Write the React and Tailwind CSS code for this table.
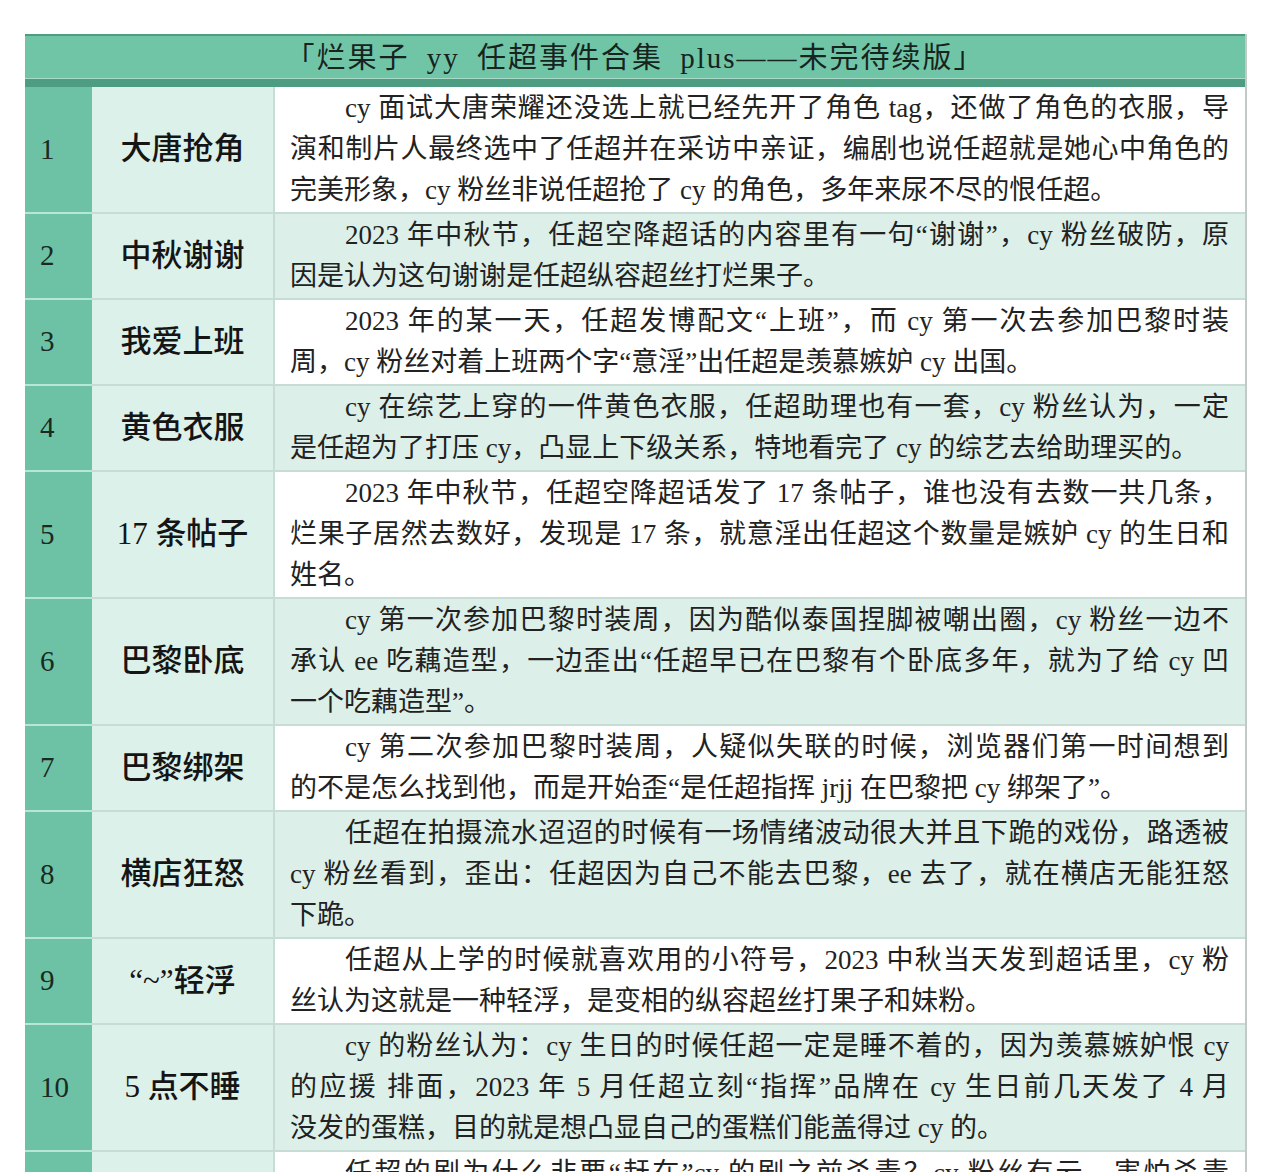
const serif = "font-['Liberation_Serif','Noto_Sans_CJK_SC',serif]"

const rows = [
  {
    n: '1',
    tag: '大唐抢角',
    lines: [
      'cy 面试大唐荣耀还没选上就已经先开了角色 tag，还做了角色的衣服，导',
      '演和制片人最终选中了任超并在采访中亲证，编剧也说任超就是她心中角色的',
      '完美形象，cy 粉丝非说任超抢了 cy 的角色，多年来尿不尽的恨任超。',
    ],
  },
  {
    n: '2',
    tag: '中秋谢谢',
    lines: [
      '2023 年中秋节，任超空降超话的内容里有一句“谢谢”，cy 粉丝破防，原',
      '因是认为这句谢谢是任超纵容超丝打烂果子。',
    ],
  },
  {
    n: '3',
    tag: '我爱上班',
    lines: [
      '2023 年的某一天，任超发博配文“上班”，而 cy 第一次去参加巴黎时装',
      '周，cy 粉丝对着上班两个字“意淫”出任超是羡慕嫉妒 cy 出国。',
    ],
  },
  {
    n: '4',
    tag: '黄色衣服',
    lines: [
      'cy 在综艺上穿的一件黄色衣服，任超助理也有一套，cy 粉丝认为，一定',
      '是任超为了打压 cy，凸显上下级关系，特地看完了 cy 的综艺去给助理买的。',
    ],
  },
  {
    n: '5',
    tag: '17 条帖子',
    lines: [
      '2023 年中秋节，任超空降超话发了 17 条帖子，谁也没有去数一共几条，',
      '烂果子居然去数好，发现是 17 条，就意淫出任超这个数量是嫉妒 cy 的生日和',
      '姓名。',
    ],
  },
  {
    n: '6',
    tag: '巴黎卧底',
    lines: [
      'cy 第一次参加巴黎时装周，因为酷似泰国捏脚被嘲出圈，cy 粉丝一边不',
      '承认 ee 吃藕造型，一边歪出“任超早已在巴黎有个卧底多年，就为了给 cy 凹',
      '一个吃藕造型”。',
    ],
  },
  {
    n: '7',
    tag: '巴黎绑架',
    lines: [
      'cy 第二次参加巴黎时装周，人疑似失联的时候，浏览器们第一时间想到',
      '的不是怎么找到他，而是开始歪“是任超指挥 jrjj 在巴黎把 cy 绑架了”。',
    ],
  },
  {
    n: '8',
    tag: '横店狂怒',
    lines: [
      '任超在拍摄流水迢迢的时候有一场情绪波动很大并且下跪的戏份，路透被',
      'cy 粉丝看到，歪出：任超因为自己不能去巴黎，ee 去了，就在横店无能狂怒',
      '下跪。',
    ],
  },
  {
    n: '9',
    tag: '“~”轻浮',
    lines: [
      '任超从上学的时候就喜欢用的小符号，2023 中秋当天发到超话里，cy 粉',
      '丝认为这就是一种轻浮，是变相的纵容超丝打果子和妹粉。',
    ],
  },
  {
    n: '10',
    tag: '5 点不睡',
    lines: [
      'cy 的粉丝认为：cy 生日的时候任超一定是睡不着的，因为羡慕嫉妒恨 cy',
      '的应援 排面，2023 年 5 月任超立刻“指挥”品牌在 cy 生日前几天发了 4 月',
      '没发的蛋糕，目的就是想凸显自己的蛋糕们能盖得过 cy 的。',
    ],
  },
  {
    n: '11',
    tag: '',
    lines: [
      '任超的剧为什么非要“赶在”cy 的剧之前杀青？cy 粉丝有云，害怕杀青',
      '\u00a0',
      '\u00a0',
    ],
  },
]

function Row({ row, even }) {
  return (
    <div className="grid grid-cols-[67px_183px_1fr]">
      <div className={`bg-[#6dc2a5] border-b-2 border-[#b6e6d4] flex items-center pl-[15px] text-[29px] text-[#1a2a22] ${serif}`}>
        {row.n}
      </div>
      <div className="bg-[#dcf1ea] border-b-2 border-r-2 border-[#c6dcd4] flex items-center justify-center text-[31px] font-medium text-[#151515]">
        {row.tag}
      </div>
      <div className={`${even ? 'bg-[#dcf0e9]' : 'bg-white'} border-b-2 border-[#c6dcd4] py-[1px] pl-[15px] pr-[16px] text-[27px] leading-[41px] text-[#222]`}>
        {row.lines.map((l, i) => {
          const last = i === row.lines.length - 1
          return (
            <div
              key={i}
              className={`whitespace-nowrap ${i === 0 ? 'indent-[55px]' : ''} ${last ? 'text-left' : 'text-justify [text-align-last:justify]'}`}
            >
              {l}
            </div>
          )
        })}
      </div>
    </div>
  )
}

export default function App() {
  return (
    <div className={`w-[1274px] h-[1172px] overflow-hidden bg-white pt-[34px] pl-[25px] ${serif}`}>
      <div className="w-[1222px] border-r-2 border-[#c2c9c6]">
        <div className="h-[44px] bg-[#71c5a7] border-t-2 border-[#4f9c81] flex items-center justify-center pt-[4px] text-[29px] tracking-[2px] [word-spacing:8px] text-[#17241e]">
          「烂果子 yy 任超事件合集 plus——未完待续版」
        </div>
        <div className="h-[9px] bg-[#4e9c81] border-t border-[#a9dcc8]" />
        {rows.map((r, i) => (
          <Row key={r.n} row={r} even={i % 2 === 1} />
        ))}
      </div>
    </div>
  )
}
